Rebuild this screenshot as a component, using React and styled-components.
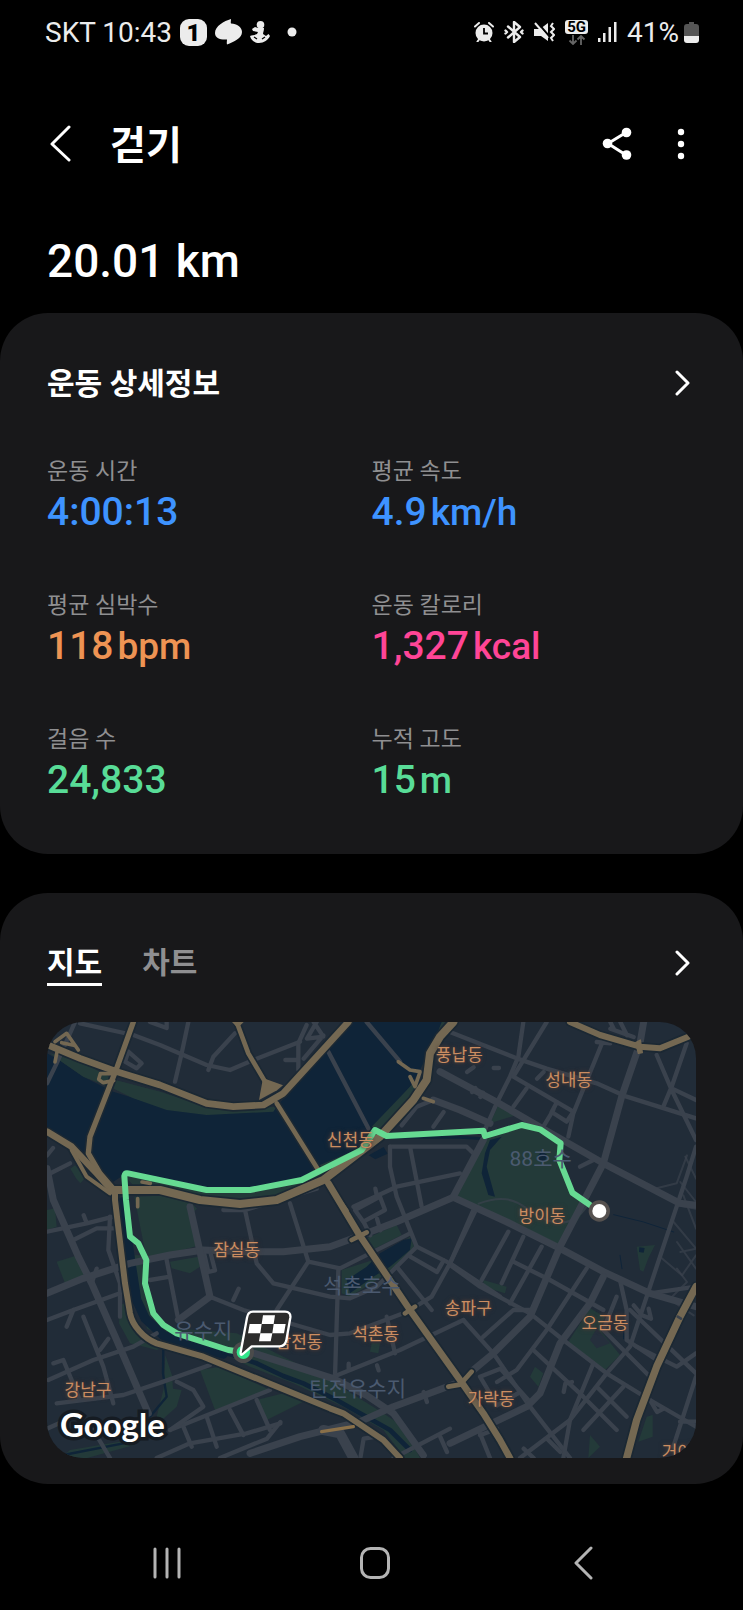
import React, { useState } from "react";
import styled, { createGlobalStyle } from "styled-components";

const GlobalStyle = createGlobalStyle`
  *, *::before, *::after { box-sizing: border-box; }
  body {
    margin: 0;
    background: #000;
    color: #fff;
    font-family: Roboto, "Noto Sans CJK KR", sans-serif;
  }
`;

const Screen = styled.div`
  display: flex;
  flex-direction: column;
  min-height: 100vh;
`;

const StatusBar = styled.div`
  display: flex;
  justify-content: space-between;
  align-items: center;
  height: 64px;
  padding: 0 44px 0 45px;
  color: #ececec;
  font-size: 28px;
  font-weight: 400;
`;

const StatusGroup = styled.div`
  display: flex;
  align-items: center;
  gap: ${(p) => p.$gap}px;

  svg { display: block; }
`;

const AppBadge = styled.span`
  width: 27px;
  height: 27px;
  border-radius: 9px;
  background: #ececec;
  color: #000;
  font-size: 24px;
  font-weight: 900;
  line-height: 28px;
  text-align: center;
`;

const Network = styled.span`
  display: flex;
  flex-direction: column;
  align-items: center;
  gap: 1px;
`;

const NetworkTag = styled.span`
  padding: 0 2px;
  border-radius: 3px;
  background: #ececec;
  color: #000;
  font-size: 15px;
  font-weight: 700;
  line-height: 14px;
`;

const AppBar = styled.header`
  display: flex;
  align-items: center;
  height: 62px;
  margin-top: 50px;
  padding: 0 40px 0 39px;
`;

const IconButton = styled.button`
  display: flex;
  align-items: center;
  justify-content: center;
  width: ${(p) => p.$width || 44}px;
  height: 44px;
  padding: 0;
  border: 0;
  background: none;
  color: inherit;
  cursor: pointer;
`;

const Title = styled.h1`
  flex: 1;
  margin: 0 0 0 27px;
  padding-top: 2px;
  font-size: 39px;
  font-weight: 700;
  line-height: 60px;
`;

const Distance = styled.p`
  margin: 55px 47px 22px;
  font-size: 46px;
  font-weight: 500;
  line-height: 60px;
`;

const Card = styled.section`
  padding: 49px 47px ${(p) => p.$bottom}px;
  border-radius: 48px;
  background: #18181a;

  & + & { margin-top: 39px; }
`;

const CardHead = styled.div`
  display: flex;
  align-items: center;
  justify-content: space-between;
  height: 44px;
`;

const CardTitle = styled.h2`
  margin: 0;
  font-size: 30px;
  font-weight: 700;
  line-height: 44px;
`;

const Metrics = styled.dl`
  display: grid;
  grid-template-columns: 1fr 1fr;
  row-gap: 55px;
  margin: 51px 0 0;
`;

const MetricLabel = styled.dt`
  margin-bottom: 2px;
  color: #8f8f91;
  font-size: 23px;
  line-height: 30px;
`;

const MetricValue = styled.dd`
  display: flex;
  align-items: baseline;
  gap: 4px;
  margin: 0;
  color: ${(p) => p.$color};
  font-size: 39px;
  font-weight: 500;
  line-height: 46px;
`;

const Unit = styled.span`
  font-size: 37px;
`;

const Tabs = styled.div`
  display: flex;
  gap: 40px;
`;

const Tab = styled.button`
  height: 44px;
  padding: 0;
  border: 0;
  border-bottom: 3px solid ${(p) => (p.$active ? "#fff" : "transparent")};
  background: none;
  color: ${(p) => (p.$active ? "#fff" : "#8f8f91")};
  font-family: inherit;
  font-size: 30px;
  font-weight: 700;
  line-height: 40px;
  cursor: pointer;
`;

const MapFrame = styled.div`
  position: relative;
  margin-top: 36px;
  overflow: hidden;
  border-radius: 36px;
  background: #212c38;

  svg { display: block; width: 100%; height: auto; }
`;

const MapOverlay = styled.div`
  position: absolute;
  inset: 0;
`;

const Place = styled.span`
  position: absolute;
  left: ${(p) => (p.$x / 1947) * 100}%;
  top: ${(p) => (p.$y / 1308) * 100}%;
  transform: translate(-50%, -50%);
  color: #cb8d61;
  font-size: 17px;
  line-height: 24px;
  white-space: nowrap;
  text-shadow: 0 0 3px #5a4238, 0 0 5px #4a3a36;
`;

const WaterPlace = styled(Place)`
  color: #4b5a70;
  font-size: 21px;
  text-shadow: none;
`;

const MapBrand = styled.span`
  position: absolute;
  left: 13px;
  bottom: 14px;
  color: #fff;
  font-family: Lato, sans-serif;
  font-size: 33px;
  font-weight: 700;
  line-height: 40px;
  -webkit-text-stroke: 7px #151b22;
  paint-order: stroke fill;
`;

const NavBar = styled.nav`
  display: grid;
  grid-template-columns: repeat(3, 1fr);
  justify-items: center;
  align-items: center;
  height: 82px;
  margin-top: 38px;
  padding: 0 56px 0 63px;
  color: #b4b4b4;
`;

const METRICS = [
  { label: "운동 시간", value: "4:00:13", color: "#3e93ff" },
  { label: "평균 속도", value: "4.9", unit: "km/h", color: "#3e93ff" },
  { label: "평균 심박수", value: "118", unit: "bpm", color: "#ee9353" },
  { label: "운동 칼로리", value: "1,327", unit: "kcal", color: "#ff4596" },
  { label: "걸음 수", value: "24,833", color: "#58dc97" },
  { label: "누적 고도", value: "15", unit: "m", color: "#58dc97" },
];

const PLACES = [
  ["풍납동", 1237, 100],
  ["성내동", 1565, 174],
  ["신천동", 910, 355],
  ["잠실동", 569, 684],
  ["방이동", 1485, 582],
  ["삼전동", 756, 960],
  ["석촌동", 986, 937],
  ["송파구", 1264, 859],
  ["오금동", 1674, 902],
  ["가락동", 1332, 1132],
  ["강남구", 123, 1105],
  ["거여동", 1915, 1291],
];

const WATER_PLACES = [
  ["88호수", 1481, 411],
  ["석촌호수", 945, 792],
  ["유수지", 469, 926],
  ["탄전유수지", 932, 1100],
];

const PARKS = [
  "9,94 109,124 204,174 339,209 459,249 559,264 689,254 679,269 479,279 359,264 259,229 189,194 109,164 44,119",
  "1094,189 1109,204 999,334 974,314",
  "1174,0 1194,0 1159,64 1124,134 1117,124",
  "229,460 479,505 609,509 769,465 819,425 939,374 949,400 819,490 699,525 579,545 479,525 379,500 259,490",
  "262,524 410,518 450,560 429,580 459,670 299,712",
  "369,719 454,704 459,734 429,754 374,739",
  "0,564 24,559 29,614 0,624",
  "29,719 94,699 114,769 54,784",
  "70,440 84,430 118,464 100,484 88,470",
  "219,850 240,840 269,930 349,974 330,984 249,964 216,904",
  "262,700 285,700 300,800 319,874 379,919 569,934 709,1004 849,1074 1009,1174 1069,1214 1119,1308 1074,1308 1009,1224 889,1154 739,1084 609,1034 539,1000 399,960 300,920 269,800",
  "459,1044 519,1034 669,1104 504,1164",
  "629,1134 709,1114 779,1134 659,1194",
  "355,1000 375,1060 378,1100 404,1104 389,1154 349,1190 329,1184 350,1100",
  "69,1284 249,1254 259,1270 120,1308 40,1308",
  "959,649 1049,609 1064,639 974,684",
  "884,744 1009,704 1089,644 1102,674 1049,734 989,774 909,824 884,814",
  "1354,249 1409,279 1329,304",
  "1309,344 1429,309 1479,324 1544,364 1544,414 1579,514 1619,554 1544,669 1529,664 1224,519",
  "1769,674 1824,669 1804,709 1789,749 1779,744",
  "1309,774 1379,794 1374,814 1309,794",
  "1629,859 1674,884 1659,924 1719,999 1674,1044 1564,959",
  "1464,1034 1489,1054 1474,1094 1449,1064",
  "1799,1184 1817,1179 1817,1244 1774,1259",
  "1629,1239 1659,1274 1624,1308",
  "974,964 999,964 994,994 969,989",
];

const RIVER =
  "M0 94L44 119 109 164 199 209 309 244 459 274 559 271 679 264 759 174 914 0H1184L1159 64 1119 144 1089 194 979 319 949 374 819 429 764 469 614 499H479L239 454 199 479 124 404 74 374 0 320Z";

const LAKES = [
  "999,694 1069,654 1094,649 1089,684 1029,734 979,764 909,814 899,774 959,734",
  "1329,354 1364,344 1329,384 1319,434 1344,524 1324,519 1304,454 1314,394",
  "1470,404 1484,388 1500,398 1494,416 1476,418",
  "1777,676 1793,678 1790,692 1776,690",
  "965,400 1010,375 1022,395 985,412",
];

const MAJOR_ROADS = [
  "M0 440L19 534 94 704 134 784 209 954 304 1174",
  "M0 814L109 769 249 724 369 699 469 684 589 689 709 689 849 674 959 634 1049 599 1219 526 1380 600 1539 679 1669 749 1809 814 1947 854",
  "M609 990L859 1070 959 1120 1039 1174 1129 1300",
  "M609 1294L759 1244 939 1199 1039 1154 1229 1084",
  "M429 554L489 824 394 894",
  "M1159 234L1239 264 1329 304",
  "M1179 149L1349 240 1459 304 1669 424 1899 544 1947 550",
  "M1790 0L1779 64 1724 224 1669 424 1539 674 1449 884 1339 994 1279 1044",
  "M1309 354L1219 524",
  "M1209 1264L1439 1154 1479 1114 1539 964 1629 844 1669 764",
];

const MINOR_ROADS = [
  "M99 4L259 39 339 69 479 129 549 144 619 114 759 59",
  "M424 0L404 94 384 179",
  "M564 34L499 104 484 144",
  "M309 0L359 18V0",
  "M244 89L284 124 269 139 234 119Z",
  "M84 0L29 124 0 184",
  "M754 144V64L779 9M715 114H754",
  "M809 0L780 50 829 44 800 0M770 110L829 40",
  "M844 89L964 319",
  "M959 0L1059 119",
  "M0 459L69 424M0 400L18 378",
  "M0 629L119 604 199 584M79 654L149 619 199 619M119 604L110 580",
  "M189 584L184 684 219 784V884",
  "M0 894L79 864 219 814M59 914L79 864M149 740L134 784",
  "M4 1074L139 1014 259 974 329 934",
  "M29 1144L229 1119 349 1079 489 1029",
  "M19 1024L49 1014 99 1134",
  "M109 884L169 1034 199 1144M159 984L184 950",
  "M309 774L369 764M359 714L394 894",
  "M469 684L484 750 504 745 490 690",
  "M489 824L589 864 849 939 909 934 1069 874M559 834L575 800",
  "M594 564L629 724 679 784 849 824 909 829 989 794 1109 674",
  "M729 544L784 719 689 864M784 719L879 739 1089 634",
  "M874 744L864 1064",
  "M859 1064L1059 984 1249 894",
  "M1019 884L1044 994",
  "M329 1308L429 1264 599 1234 700 1204",
  "M369 1224L669 1104",
  "M409 1214L434 1274M479 1184L509 1274M549 1164L589 1239M629 1134L669 1224",
  "M389 1079L439 1104 469 1154 369 1224",
  "M139 1224L189 1308M0 1220L90 1180",
  "M519 1308L660 1250 700 1200",
  "M529 564H594L809 500",
  "M1029 374H1259L1279 394M1089 374L1124 554",
  "M1029 374V434L1049 524 1109 674 1209 724 1359 824",
  "M919 554L1049 494 1239 454M924 564L999 524 1014 564 949 599ZM985 500L990 524",
  "M970 640L950 600M1000 625L990 590",
  "M1064 310L1109 254 1159 234M1159 314L1190 270",
  "M1209 30L1409 109 1499 140 1649 184 1739 224 1947 289",
  "M1429 0L1414 104 1389 164 1349 244 1309 334",
  "M1499 0L1399 164 1579 269 1559 299 1514 270 1530 240",
  "M1669 54L1579 274 1564 344M1649 60L1690 64",
  "M1439 199L1399 254M1519 264L1489 314M1490 150L1470 170",
  "M1260 150L1280 136M1340 138H1356M1275 210L1285 198M1300 225L1308 212",
  "M1829 99L1874 204 1947 354M1919 64L1874 194 1849 254M1874 199L1947 234",
  "M1690 0L1700 20M1720 0L1740 40M1690 20L1760 45",
  "M1947 374L1919 464 1889 554 1839 704 1809 794 1779 884 1749 974 1679 1054 1569 1194 1419 1308",
  "M1599 434L1639 414",
  "M1209 724L1284 569M1304 774L1384 629M1364 784L1429 644M1389 844L1484 674",
  "M1399 719L1509 774 1669 864",
  "M1209 729L1299 794 1449 874 1549 954 1679 1054 1809 1134 1947 1214",
  "M1619 739L1499 924 1409 1044 1350 1080",
  "M1249 894L1339 994 1449 1154 1569 1308M1309 944L1399 864H1449",
  "M1459 984L1609 1124 1709 1224M1639 1024L1569 1194 1549 1308",
  "M1649 1094L1739 1184M1729 1094L1609 1224M1550 1110L1555 1085 1575 1080",
  "M1719 774L1739 864V954L1829 1014M1709 824L1669 924 1809 1064",
  "M1749 864L1947 1054M1769 974L1889 1034 1947 994",
  "M1760 850L1785 880 1812 890 1805 860",
  "M1947 1064L1879 1274M1899 1199H1947M1809 1134L1830 1170 1850 1160",
  "M1809 814L1947 794",
  "M1299 1064L1360 1040 1449 1140M1299 1064L1350 1150 1420 1110M1299 1234L1329 1308M1299 1240L1350 1220",
  "M1279 564L1209 724 1154 824 1089 864M1049 734L1154 864M1090 704L1170 750 1190 715",
  "M940 1308L950 1250 980 1245M1040 1308L1209 1220M1180 1245L1200 1290",
  "M1130 1110L1140 1140M905 1025V1040M990 1030L995 1045",
  "M1430 1280L1460 1308M1500 1250L1540 1290",
];

const LANES = [
  "M1829 499L1889 484 1920 400",
  "M1915 404L1947 470M1900 480L1947 540M1890 550L1947 560",
  "M1839 704L1905 760 1947 700M1890 660L1947 740M1880 600L1947 680 1900 690",
  "M1869 830L1920 780 1890 740M1880 840L1940 880M1909 520L1947 620",
  "M1295 545C1360 520 1400 530 1440 560S1560 640 1619 554",
];

const HIGHWAYS = [
  { d: "M259 0L209 139 129 344 124 394 159 454 199 500", w: 16 },
  { d: "M569 0L604 94 654 179", w: 14 },
  { d: "M689 244L814 444", w: 14 },
  { d: "M844 484L934 634 1089 864 1239 1074 1309 1174 1359 1254 1389 1308", w: 20 },
  { d: "M914 654L959 631M1204 1094L1239 1088 1274 1049M1074 874L1104 854M880 540L898 566", w: 14 },
  { d: "M0 329L74 374 149 454 194 504", w: 20 },
  { d: "M74 384L119 464 189 514", w: 12 },
  { d: "M0 68L99 109 209 149 339 189 479 244 559 254 649 249 709 214 759 159 904 0", w: 20 },
  { d: "M204 510V534L234 784 249 874C256 910 290 950 329 964L469 1004 849 1159 889 1174 1009 1254 1059 1308", w: 18 },
  { d: "M194 504H339L459 534 579 546 689 534 829 474 999 344 1099 234 1139 174 1149 94 1179 44 1219 0", w: 24 },
  { d: "M1569 0L1659 39 1779 74 1839 79 1924 44", w: 18 },
  { d: "M1947 794L1899 884 1829 1034 1769 1194 1739 1308", w: 22 },
];

const RAMPS = [
  "M1054 119L1089 144 1119 149M1089 164L1104 194 1119 150M1129 229L1159 239",
  "M24 59L59 34 94 84M30 90L24 120M44 62L80 70",
  "M205 155L160 155 155 172 168 182 200 176",
  "M272 530V554M285 480L310 484",
];

const ROUTE =
  "M589 991L544 984 389 934 349 909 319 874 294 784 298 714 274 664 249 644 237 534 232 462Q234 452 244 454L479 504H609L764 474 944 384 984 324 1019 342 1309 326 1314 342 1424 309 1479 322 1541 364 1537 414 1576 512 1629 549 1657 567";

function BaseMap() {
  return (
    <svg viewBox="0 0 1947 1308" aria-hidden="true" fill="none" strokeLinejoin="round" strokeLinecap="round">
      <g fill="#233a39">
        {PARKS.map((points) => <polygon key={points} points={points} />)}
      </g>
      <path d={RIVER} fill="#0f2438" />
      <polygon points={PARKS[0]} fill="#233a39" />
      <polygon points={PARKS[1]} fill="#233a39" />
      <g fill="#0f2438">
        {LAKES.map((points) => <polygon key={points} points={points} />)}
      </g>
      <polygon points="1629,954 1649,919 1689,964 1649,979" fill="#252f3c" />
      <g stroke="#0f2438">
        <path d="M225 540L249 704 269 834 295 890 349 940 429 972 529 996" strokeWidth="28" />
        <path d="M529 990L629 1024 709 1062 769 1084 869 1134 939 1174 1029 1224 1089 1284" strokeWidth="14" />
        <path d="M349 974L348 1054 359 1124 309 1184 229 1264 49 1299" strokeWidth="7" />
        <path d="M1022 346L1240 346 1310 350" strokeWidth="9" />
        <path d="M1700 578L1790 600 1880 630M1719 700L1725 740" strokeWidth="3" />
        <path d="M1730 900V950" strokeWidth="4" />
      </g>
      <g stroke="#3a424d">
        {LANES.map((d) => <path key={d} d={d} strokeWidth="6" opacity=".7" />)}
        {MINOR_ROADS.map((d) => <path key={d} d={d} strokeWidth="13" />)}
        {MAJOR_ROADS.map((d) => <path key={d} d={d} strokeWidth="21" />)}
        <path d="M829 1224L879 1234 919 1308" strokeWidth="30" />
      </g>
      <g stroke="#1b2833">
        {HIGHWAYS.map((h) => <path key={h.d} d={h.d} strokeWidth={h.w + 10} />)}
      </g>
      <g stroke="#746852">
        {HIGHWAYS.map((h) => <path key={h.d} d={h.d} strokeWidth={h.w} />)}
        {RAMPS.map((d) => <path key={d} d={d} strokeWidth="11" />)}
      </g>
      <polygon points="648,168 708,190 690,205 636,234" fill="#746852" />
      <polygon points="555,0 590,0 572,18" fill="#746852" />
      <path d="M1766 62L1780 54 1786 92 1774 94Z" fill="#746852" stroke="#746852" strokeWidth="4" />
      <path d="M824 1229L919 1214" stroke="#8a7049" strokeWidth="10" />
      <path d="M1892 884L1902 890" stroke="#3a424d" strokeWidth="8" />
      <path d={ROUTE} stroke="#66da92" strokeWidth="18" />
    </svg>
  );
}

function MapMarkers() {
  return (
    <svg viewBox="0 0 1947 1308" aria-hidden="true">
      <circle cx="1657" cy="567" r="32" fill="#55514f" />
      <circle cx="1657" cy="567" r="21" fill="#fff" />
      <circle cx="589" cy="991" r="32" fill="#4b4b4b" />
      <circle cx="589" cy="991" r="20" fill="#32e58b" />
      <path
        d="M618 869H714Q732 869 730 887L718 955Q714 973 698 973H614L586 997Q580 1001 581 991L600 887Q603 869 618 869Z"
        fill="#2c2c2c"
        stroke="#fff"
        strokeWidth="7"
        strokeLinejoin="round"
      />
      <path
        d="M648 880H684L680 906H716L711 934H676L671 958H636L640 934H603L608 906H644ZM644 906L640 934H676L680 906Z"
        fill="#fff"
        fillRule="evenodd"
      />
    </svg>
  );
}

function ChevronRight() {
  return (
    <svg width="28" height="28" viewBox="0 0 28 28" fill="none" stroke="currentColor" strokeWidth="3" strokeLinecap="round" strokeLinejoin="round" aria-hidden="true">
      <path d="M9 2L20 13L9 24" />
    </svg>
  );
}

function LeftStatus() {
  return (
    <StatusGroup $gap={8}>
      <span>SKT 10:43</span>
      <AppBadge>1</AppBadge>
      <StatusGroup $gap={8}>
        <svg width="27" height="26" viewBox="0 0 27 26" fill="#ececec" aria-hidden="true">
          <path d="M16 0C16 2 15.500 3.500 16 4.500C22 5 27 8 27 13C27 19 19 23 12 25.500C11.500 24 12 22 12 20.500C5 21 0 19 0 14C0 7 9 2 16 0Z" />
        </svg>
        <svg width="20" height="22" viewBox="0 0 20 22" fill="#ececec" aria-hidden="true">
          <circle cx="10.500" cy="3.800" r="3.800" />
          <path d="M8 7H14C14 10 13 11 13 13L16 15L18.500 13L20 15C18 19 14 22 9 22C4 22 1 19 0 15C2 14 5 14 7 13L8 11L3 10L2 8L5 6Z" />
          <path d="M4 16L7 18M15 16L12 18" stroke="#000" strokeWidth="1.300" />
        </svg>
        <svg width="28" height="10" viewBox="0 0 28 10" fill="#ececec" aria-hidden="true">
          <circle cx="14" cy="5" r="4.500" />
        </svg>
      </StatusGroup>
    </StatusGroup>
  );
}

function RightStatus() {
  return (
    <StatusGroup $gap={10}>
      <svg width="20" height="20" viewBox="0 0 20 20" aria-hidden="true">
        <circle cx="10" cy="11" r="8.500" fill="#ececec" />
        <path d="M1 4.500L5 1M19 4.500L15 1M3.500 19.500L5 17.500M16.500 19.500L15 17.500" stroke="#ececec" strokeWidth="2" strokeLinecap="round" />
        <path d="M10 6V11.500H14" fill="none" stroke="#000" strokeWidth="1.800" />
      </svg>
      <svg width="20" height="22" viewBox="0 0 20 22" fill="none" stroke="#ececec" strokeWidth="2.400" strokeLinejoin="round" strokeLinecap="round" aria-hidden="true">
        <path d="M4 5.500L16 16L10 21V1L16 6L4 16.500" />
        <path d="M1.500 9.500L3 11L1.500 12.500M18.500 9.500L17 11L18.500 12.500" />
      </svg>
      <svg width="21" height="20" viewBox="0 0 21 20" aria-hidden="true">
        <path d="M0 7H6L14 1V19L7 14H0Z" fill="#ececec" />
        <path d="M3 0L15 14" stroke="#000" strokeWidth="2" />
        <path d="M1 1L14 16" stroke="#ececec" strokeWidth="2" />
        <path d="M19 1L17 4L20 7L17 10L20 13L17 16L19 19" fill="none" stroke="#ececec" strokeWidth="2" />
      </svg>
      <Network>
        <NetworkTag>5G</NetworkTag>
        <svg width="18" height="10" viewBox="0 0 18 10" fill="none" stroke="#666" strokeWidth="1.800" aria-hidden="true">
          <path d="M5 0V8.500M1.500 5.500L5 9L8.500 5.500M13 10V1.500M9.500 4.500L13 1L16.500 4.500" />
        </svg>
      </Network>
      <svg width="19" height="20" viewBox="0 0 19 20" fill="#ececec" aria-hidden="true">
        <rect x="0" y="16" width="2.500" height="4" />
        <rect x="5" y="11" width="2.500" height="9" />
        <rect x="10.500" y="5" width="2.500" height="15" />
        <rect x="16" y="0" width="2.500" height="20" />
      </svg>
      <StatusGroup $gap={5}>
        <span>41%</span>
        <svg width="15" height="21" viewBox="0 0 15 21" aria-hidden="true">
          <path d="M5 0H10V2H12Q15 2 15 5V15H0V5Q0 2 3 2H5Z" fill="#555" />
          <path d="M0 14H15V18Q15 21 12 21H3Q0 21 0 18Z" fill="#ececec" />
        </svg>
      </StatusGroup>
    </StatusGroup>
  );
}

export default function App() {
  const [tab, setTab] = useState("지도");

  return (
    <Screen>
      <GlobalStyle />
      <StatusBar>
        <LeftStatus />
        <RightStatus />
      </StatusBar>

      <AppBar>
        <IconButton aria-label="뒤로">
          <svg width="24" height="40" viewBox="0 0 24 40" fill="none" stroke="currentColor" strokeWidth="3" strokeLinecap="round" strokeLinejoin="round" aria-hidden="true">
            <path d="M20 2L3 19L20 35" />
          </svg>
        </IconButton>
        <Title>걷기</Title>
        <IconButton aria-label="공유" $width={84}>
          <svg width="30" height="36" viewBox="0 0 30 36" fill="currentColor" aria-hidden="true">
            <path d="M24 5.500L6 16.500L24 28" fill="none" stroke="currentColor" strokeWidth="3" />
            <circle cx="24.500" cy="5.500" r="4.800" />
            <circle cx="5.500" cy="16.500" r="4.800" />
            <circle cx="24.500" cy="28" r="4.800" />
          </svg>
        </IconButton>
        <IconButton aria-label="더보기">
          <svg width="8" height="34" viewBox="0 0 8 34" fill="currentColor" aria-hidden="true">
            <circle cx="4" cy="4" r="3.200" />
            <circle cx="4" cy="16" r="3.200" />
            <circle cx="4" cy="28" r="3.200" />
          </svg>
        </IconButton>
      </AppBar>

      <Distance>20.01 km</Distance>

      <main>
        <Card $bottom={50}>
          <CardHead>
            <CardTitle>운동 상세정보</CardTitle>
            <IconButton aria-label="운동 상세정보 보기" $width={28}>
              <ChevronRight />
            </IconButton>
          </CardHead>
          <Metrics>
            {METRICS.map((m) => (
              <div key={m.label}>
                <MetricLabel>{m.label}</MetricLabel>
                <MetricValue $color={m.color}>
                  <span>{m.value}</span>
                  {m.unit && <Unit>{m.unit}</Unit>}
                </MetricValue>
              </div>
            ))}
          </Metrics>
        </Card>

        <Card $bottom={26}>
          <CardHead>
            <Tabs role="tablist">
              {["지도", "차트"].map((name) => (
                <Tab key={name} role="tab" aria-selected={tab === name} $active={tab === name} onClick={() => setTab(name)}>
                  {name}
                </Tab>
              ))}
            </Tabs>
            <IconButton aria-label="지도 크게 보기" $width={28}>
              <ChevronRight />
            </IconButton>
          </CardHead>
          <MapFrame>
            <BaseMap />
            <MapOverlay>
              {WATER_PLACES.map(([name, x, y]) => (
                <WaterPlace key={name} $x={x} $y={y}>{name}</WaterPlace>
              ))}
              {PLACES.map(([name, x, y]) => (
                <Place key={name} $x={x} $y={y}>{name}</Place>
              ))}
            </MapOverlay>
            <MapOverlay>
              <MapMarkers />
            </MapOverlay>
            <MapBrand>Google</MapBrand>
          </MapFrame>
        </Card>
      </main>

      <NavBar>
        <IconButton aria-label="최근 앱">
          <svg width="30" height="32" viewBox="0 0 30 32" fill="none" stroke="currentColor" strokeWidth="3" strokeLinecap="round" aria-hidden="true">
            <path d="M3 2V30M15 2V30M27 2V30" />
          </svg>
        </IconButton>
        <IconButton aria-label="홈">
          <svg width="30" height="32" viewBox="0 0 30 32" fill="none" stroke="currentColor" strokeWidth="3" aria-hidden="true">
            <rect x="1.500" y="1.500" width="27" height="29" rx="9" />
          </svg>
        </IconButton>
        <IconButton aria-label="뒤로 가기">
          <svg width="20" height="34" viewBox="0 0 20 34" fill="none" stroke="currentColor" strokeWidth="3" strokeLinecap="round" strokeLinejoin="round" aria-hidden="true">
            <path d="M18 2L3 17L18 32" />
          </svg>
        </IconButton>
      </NavBar>
    </Screen>
  );
}
